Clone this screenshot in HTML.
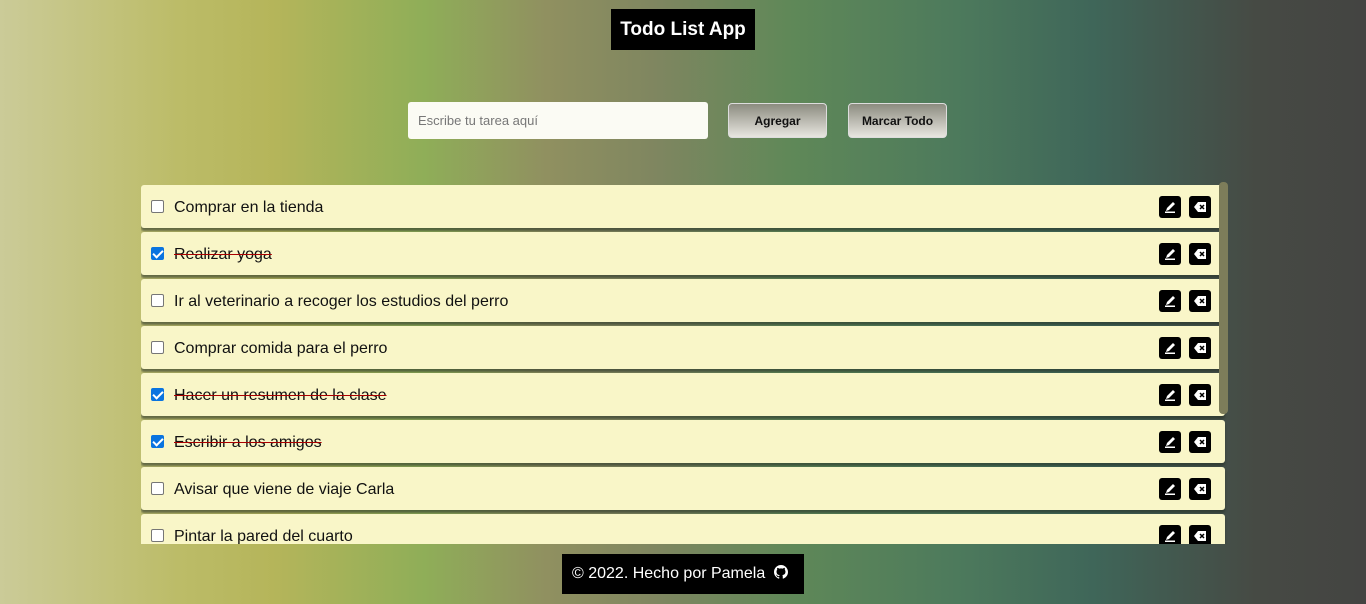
<!DOCTYPE html>
<html><head><meta charset="utf-8"><style>
*{box-sizing:border-box}
body{margin:0;width:1366px;height:604px;overflow:hidden;font-family:"Liberation Sans",Arial,sans-serif;
background:linear-gradient(90deg,#cbcb98 0%,#bcbc68 13%,#b5b55a 20%,#8fae58 31%,#909060 40%,#7f8660 48%,#5f8858 58%,#4d7a5c 70%,#3f6659 80%,#464a44 92%,#444442 100%);position:relative}
.title{position:absolute;left:611px;top:9px;width:144px;height:41px;background:#000;color:#fff;font-weight:bold;font-size:19px;text-align:center;line-height:42px}
.inp{position:absolute;left:408px;top:102px;width:300px;height:37px;background:#fbfbf4;border-radius:3px;font-size:13px;color:#777;padding-left:10px;line-height:37px}
.btn{position:absolute;top:103px;height:35px;border:1px solid #ddd;border-radius:4px;background:linear-gradient(#8c8c80,#e8e6e0);font-size:12px;font-weight:bold;color:#111;text-align:center;line-height:34px}
.list{position:absolute;left:141px;top:182px;width:1087px;height:362px;overflow:hidden}
.item{position:absolute;left:0;width:1084px;height:43px;background:#f9f6c8;border-radius:3px;box-shadow:0 3px 2px rgba(40,50,40,.6)}
.cb{position:absolute;left:10px;top:15px;width:13px;height:13px;border:1px solid #767676;border-radius:2px;background:#fff}
.cb.on{background:#0a74e0;border-color:#0a74e0}
.cb.on:after{content:"";position:absolute;left:3px;top:0px;width:4px;height:8px;border:solid #fff;border-width:0 2px 2px 0;transform:rotate(45deg)}
.t{position:absolute;left:33px;top:14px;font-size:16px;color:#111}
.t.d{text-decoration:line-through;text-decoration-color:#a00}
.ic{position:absolute;top:11px;width:22px;height:22px;background:#000;border-radius:3px}
.sb{position:absolute;left:1078px;top:0;width:9px;height:232px;background:#7d7d5a;border-radius:4px}
.foot{position:absolute;left:562px;top:554px;width:242px;height:40px;background:#000;color:#fff;font-size:16px;line-height:40px;padding-left:10px}
</style></head><body>
<div class="title">Todo List App</div>
<div class="inp">Escribe tu tarea aquí</div>
<div class="btn" style="left:728px;width:99px">Agregar</div>
<div class="btn" style="left:848px;width:99px">Marcar Todo</div>
<div class="list">
<div class="item" style="top:3px"><div class="cb"></div><div class="t">Comprar en la tienda</div></div>
<div class="item" style="top:50px"><div class="cb on"></div><div class="t d">Realizar yoga</div></div>
<div class="item" style="top:97px"><div class="cb"></div><div class="t">Ir al veterinario a recoger los estudios del perro</div></div>
<div class="item" style="top:144px"><div class="cb"></div><div class="t">Comprar comida para el perro</div></div>
<div class="item" style="top:191px"><div class="cb on"></div><div class="t d">Hacer un resumen de la clase</div></div>
<div class="item" style="top:238px"><div class="cb on"></div><div class="t d">Escribir a los amigos</div></div>
<div class="item" style="top:285px"><div class="cb"></div><div class="t">Avisar que viene de viaje Carla</div></div>
<div class="item" style="top:332px"><div class="cb"></div><div class="t">Pintar la pared del cuarto</div></div>
<div class="sb"></div>
</div>
<script>
document.querySelectorAll('.item').forEach(function(it){
it.insertAdjacentHTML('beforeend','<svg class="ic" style="left:1018px" viewBox="0 0 22 22"><path d="M7 15l1-3 6-6 2 2-6 6z" fill="#fff"/><rect x="6" y="15.5" width="10" height="1.5" fill="#fff"/></svg><svg class="ic" style="left:1048px" viewBox="0 0 22 22"><path d="M9 6h8v10H9l-4-5z" fill="#fff"/><path d="M11 9l4 4M15 9l-4 4" stroke="#000" stroke-width="1.5"/></svg>');
});
</script>
<div class="foot">© 2022. Hecho por Pamela <svg width="14" height="14" viewBox="0 0 16 16" style="vertical-align:-1px;margin-left:4px"><path fill="#fff" d="M8 0C3.6 0 0 3.6 0 8c0 3.5 2.3 6.5 5.5 7.6.4.1.5-.2.5-.4v-1.4c-2.2.5-2.7-1-2.7-1-.4-.9-.9-1.200-.9-1.2-.7-.5.1-.5.1-.5.8.1 1.2.8 1.2.8.7 1.2 1.9.9 2.3.7.1-.5.3-.9.5-1.1-1.8-.2-3.6-.9-3.6-4 0-.9.3-1.6.8-2.1-.1-.2-.4-1 .1-2.1 0 0 .7-.2 2.2.8.6-.2 1.3-.3 2-.3s1.4.1 2 .3c1.5-1 2.2-.8 2.2-.8.4 1.1.2 1.9.1 2.1.5.6.8 1.3.8 2.1 0 3.1-1.9 3.7-3.6 3.9.3.3.5.8.5 1.5v2.2c0 .2.1.5.6.4C13.7 14.5 16 11.5 16 8c0-4.4-3.6-8-8-8z"/></svg></div>
</body></html>
